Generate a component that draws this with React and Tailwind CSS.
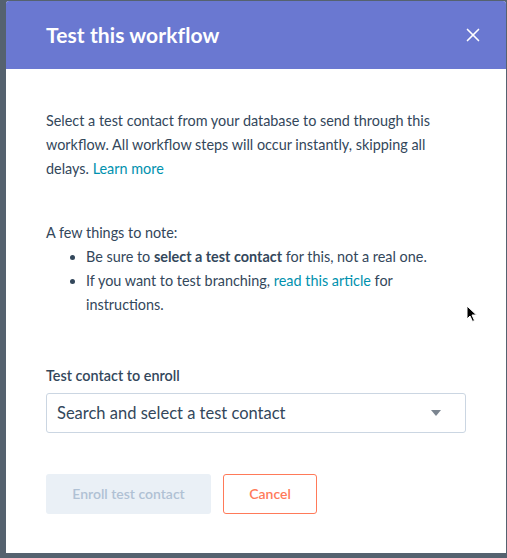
import { X } from 'lucide-react';

const font = { fontFamily: 'Lato, "Open Sans", sans-serif' };

function Cursor() {
  return (
    <svg className="absolute left-[466px] top-[305px]" width="12" height="18" viewBox="0 0 12 18">
      <path d="M1 1 L1 14 L4 11 L6.5 16.5 L8.5 15.5 L6 10 L10.5 10 Z" fill="#000" stroke="#fff" strokeWidth="1" />
    </svg>
  );
}

export default function App() {
  return (
    <div className="relative w-[507px] h-[558px] bg-[#55626f] pl-[6px] pr-[1px] pt-[1px]" style={font}>
      <div className="w-[500px] h-[552px] bg-white rounded-t-[3px] overflow-hidden flex flex-col">
        <div className="h-[68px] bg-[#6a78d1] flex items-center justify-between pl-10 pr-[22px]">
          <h2 className="text-white text-[21px] font-bold tracking-[0.1px]">Test this workflow</h2>
          <X className="text-white" size={22} strokeWidth={1.8} />
        </div>
        <div className="px-10 pt-10 text-[14.4px] leading-6 text-[#33475b]">
          <p className="pr-6">
            Select a test contact from your database to send through this workflow. All workflow steps will occur
            instantly, skipping all delays. <span className="text-[#0091ae]">Learn more</span>
          </p>
          <p className="mt-10">A few things to note:</p>
          <ul className="list-disc pl-10 pr-2">
            <li>
              Be sure to <span className="font-bold">select a test contact</span> for this, not a real one.
            </li>
            <li>
              If you want to test branching, <span className="text-[#0091ae]">read this article</span> for instructions.
            </li>
          </ul>
          <label className="block mt-[47px] font-semibold">Test contact to enroll</label>
          <div className="mt-[5px] w-[420px] h-10 border border-[#cbd6e2] rounded-[3px] bg-white flex items-center justify-between pl-[10px] pr-[24px]">
            <span className="text-[16.5px] text-[#33475b]">Search and select a test contact</span>
            <svg width="10" height="6" viewBox="0 0 10 6">
              <path d="M0 0 L10 0 L5 6 Z" fill="#7b8590" />
            </svg>
          </div>
          <div className="mt-[41px] flex gap-3 text-[14px]">
            <button className="w-[165px] h-10 rounded-[3px] bg-[#eaf0f6] text-[#b0c1d4] font-semibold">
              Enroll test contact
            </button>
            <button className="w-[94px] h-10 rounded-[3px] border border-[#ff7a59] text-[#ff7a59] font-semibold bg-white">
              Cancel
            </button>
          </div>
        </div>
      </div>
      <Cursor />
    </div>
  );
}
